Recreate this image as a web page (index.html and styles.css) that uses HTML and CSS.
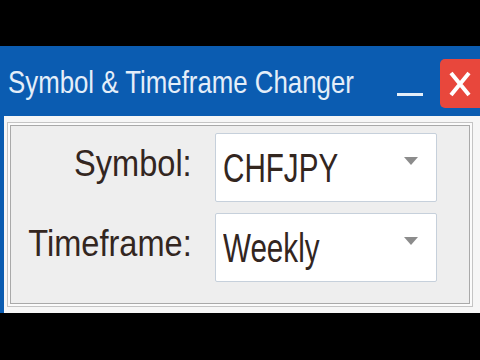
FILE: index.html
```html
<!DOCTYPE html>
<html>
<head>
<meta charset="utf-8">
<link rel="stylesheet" href="styles.css">
</head>
<body>
<div class="window">
  <div class="titlebar">
    <span class="title">Symbol &amp; Timeframe Changer</span>
    <div class="controls">
      <span class="minimize"></span>
      <span class="close">
        <svg width="22" height="26" viewBox="0 0 22 26"><path d="M2 2 L20 24 M20 2 L2 24" stroke="#fff" stroke-width="4" stroke-linecap="butt"/></svg>
      </span>
    </div>
  </div>
  <div class="body">
    <div class="panel">
      <div class="label"><span class="ltext">Symbol:</span></div>
      <div class="combo"><span class="value">CHFJPY</span><span class="arrow"></span></div>
      <div class="label"><span class="ltext">Timeframe:</span></div>
      <div class="combo"><span class="value">Weekly</span><span class="arrow"></span></div>
    </div>
  </div>
</div>
</body>
</html>
```
FILE: styles.css
```css
html, body {
  margin: 0;
  padding: 0;
  background: #000;
  width: 480px;
  height: 360px;
  overflow: hidden;
}
.window {
  margin-top: 46px;
  height: 267px;
  display: flex;
  flex-direction: column;
  background: #f6f6f6;
  border-left: 4px solid #0b5cb1;
}
.titlebar {
  height: 70px;
  margin-left: -4px;
  background: #0b5cb1;
  display: flex;
  align-items: flex-start;
  justify-content: space-between;
}
.title {
  display: inline-block;
  white-space: nowrap;
  font-family: "Liberation Sans", Arial, sans-serif;
  font-size: 32px;
  color: #e4eef9;
  margin-top: 20px;
  margin-left: 8px;
  line-height: 1;
  width: 0;
  transform: scaleX(0.807);
  transform-origin: left center;
}
.controls {
  display: flex;
  align-items: flex-start;
}
.minimize {
  width: 26px;
  height: 3px;
  background: #e4eef9;
  margin-top: 47px;
  margin-right: 17px;
}
.close {
  margin-top: 13px;
  width: 40px;
  height: 49px;
  background: #e8473c;
  border-radius: 5px 0 0 5px;
  display: flex;
  align-items: center;
  justify-content: flex-start;
  padding-left: 9px;
  box-sizing: border-box;
}
.body {
  flex: 1;
  padding: 6px 7px 6px 3px;
  display: flex;
}
.panel {
  flex: 1;
  background: #eeeeee;
  border: 1px solid #c4c4c4;
  box-shadow: inset 0 0 0 2px #fbfbfb, inset 0 0 0 3px #a9a9a9;
  display: grid;
  grid-template-columns: minmax(0, 1fr) 222px;
  grid-auto-rows: 69px;
  column-gap: 23px;
  row-gap: 11px;
  padding: 10px 35px 0 0;
}
.label {
  display: flex;
  align-items: center;
  justify-content: flex-end;
  padding-bottom: 8px;
  min-width: 0;
}
.ltext {
  display: inline-block;
  white-space: nowrap;
  font-family: "Liberation Sans", Arial, sans-serif;
  font-size: 37px;
  line-height: 1;
  color: #33261f;
  transform: scaleX(0.88);
  transform-origin: right center;
}
.combo {
  background: #fff;
  border: 1px solid #c6d0db;
  border-radius: 2px;
  display: flex;
  align-items: center;
  padding: 0 18px 0 7px;
}
.value {
  flex: 1;
  white-space: nowrap;
  font-family: "Liberation Sans", Arial, sans-serif;
  font-size: 40px;
  line-height: 1;
  color: #33261f;
  transform: scaleX(0.74);
  transform-origin: left center;
}
.arrow {
  width: 0;
  height: 0;
  border-left: 7px solid transparent;
  border-right: 7px solid transparent;
  border-top: 8px solid #8c8c8c;
  margin-bottom: 13px;
}
```
